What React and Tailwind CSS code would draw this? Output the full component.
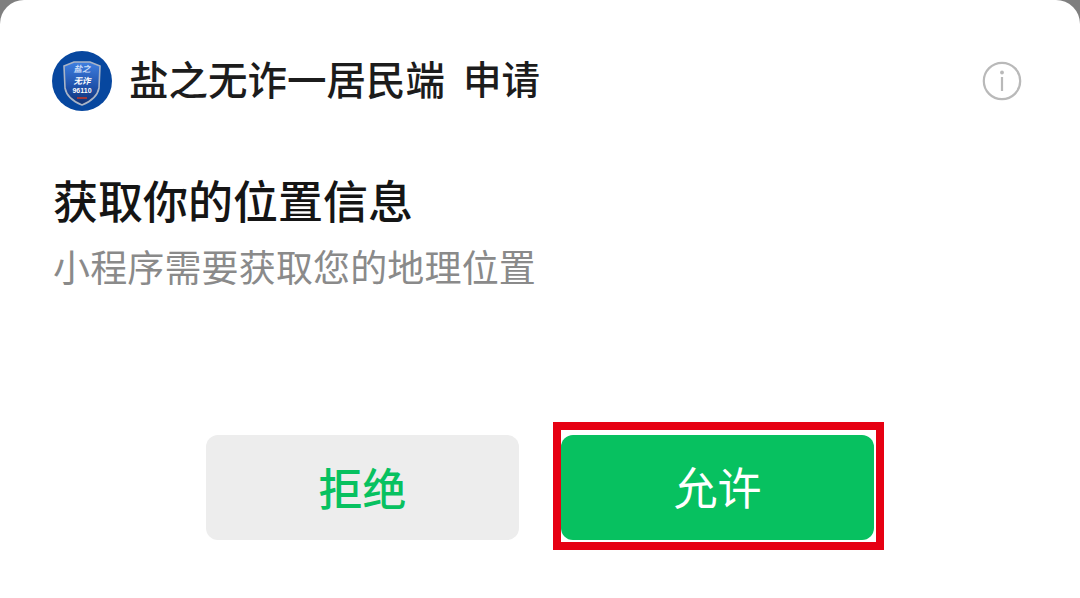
const CJK = { fontFamily: '"Noto Sans CJK SC", "Noto Sans", sans-serif' }

function Logo() {
  return (
    <svg width="60" height="60" viewBox="0 0 60 60" className="shrink-0">
      <defs>
        <linearGradient id="shield" x1="0" y1="0" x2="0" y2="1">
          <stop offset="0" stopColor="#3f7fe0" />
          <stop offset="0.6" stopColor="#1d4fa8" />
          <stop offset="1" stopColor="#0f2f70" />
        </linearGradient>
      </defs>
      <circle cx="30" cy="30" r="30" fill="#07479f" />
      <path d="M12 15 L22 11 H38 L48 15 L47 37 Q45 48 30 54 Q15 48 13 37 Z" fill="url(#shield)" stroke="#a9b4c6" strokeWidth="1.6" />
      <text x="30" y="20.5" textAnchor="middle" fontSize="8.5" fontWeight="700" fontStyle="italic" fill="#c9dcf8" style={CJK}>盐之</text>
      <text x="30" y="33" textAnchor="middle" fontSize="8.5" fontWeight="700" fontStyle="italic" fill="#ffffff" style={CJK}>无诈</text>
      <text x="30" y="42" textAnchor="middle" fontSize="7" fontWeight="700" fill="#ffffff" style={{ fontFamily: '"Liberation Sans", sans-serif' }}>96110</text>
      <path d="M25 47 H35" stroke="#c0392b" strokeWidth="1.6" />
    </svg>
  )
}

function InfoIcon() {
  return (
    <svg width="40" height="40" viewBox="0 0 40 40" className="shrink-0">
      <circle cx="20" cy="20" r="18.2" fill="none" stroke="#b9b9b9" strokeWidth="2.2" />
      <circle cx="20" cy="11.5" r="1.9" fill="#b9b9b9" />
      <rect x="18.9" y="16" width="2.2" height="14" fill="#b9b9b9" />
    </svg>
  )
}

export default function App() {
  return (
    <div className="h-[598px] w-[1080px] overflow-hidden bg-[#7f7f7f]" style={CJK}>
      <div className="flex h-full flex-col rounded-t-[24px] bg-white pl-[52px] pr-[58px] pt-[50px]">
        {/* Header */}
        <div className="flex h-[61px] items-center">
          <Logo />
          <span className="relative top-[-3px] ml-[17px] text-[39.5px] leading-none font-medium text-[#1c1c1c]">盐之无诈一居民端</span>
          <span className="relative top-[-3px] ml-[18px] text-[38.5px] leading-none font-medium text-[#1c1c1c]">申请</span>
          <div className="ml-auto">
            <InfoIcon />
          </div>
        </div>

        {/* Permission text */}
        <h1 className="mt-[61px] pl-[1px] text-[45px] leading-[56px] font-medium text-[#151515]">获取你的位置信息</h1>
        <p className="mt-[16px] pl-[1px] text-[37px] leading-[44px] tracking-[0.15px] text-[#8a8a8a]">小程序需要获取您的地理位置</p>

        {/* Buttons */}
        <div className="mt-[134px] flex items-start pl-[154px]">
          <button className="mt-[13px] h-[105px] w-[313px] rounded-[12px] bg-[#ededed] pb-[2px] text-[44px] font-medium text-[#07c160]">拒绝</button>
          <div className="ml-[34px] border-[8px] border-[#e60012] pt-[5px] pb-[2px] pr-[2px]">
            <button className="block h-[105px] w-[313px] rounded-[12px] bg-[#07c160] pb-[3px] text-[44px] text-white">允许</button>
          </div>
        </div>
      </div>
    </div>
  )
}
